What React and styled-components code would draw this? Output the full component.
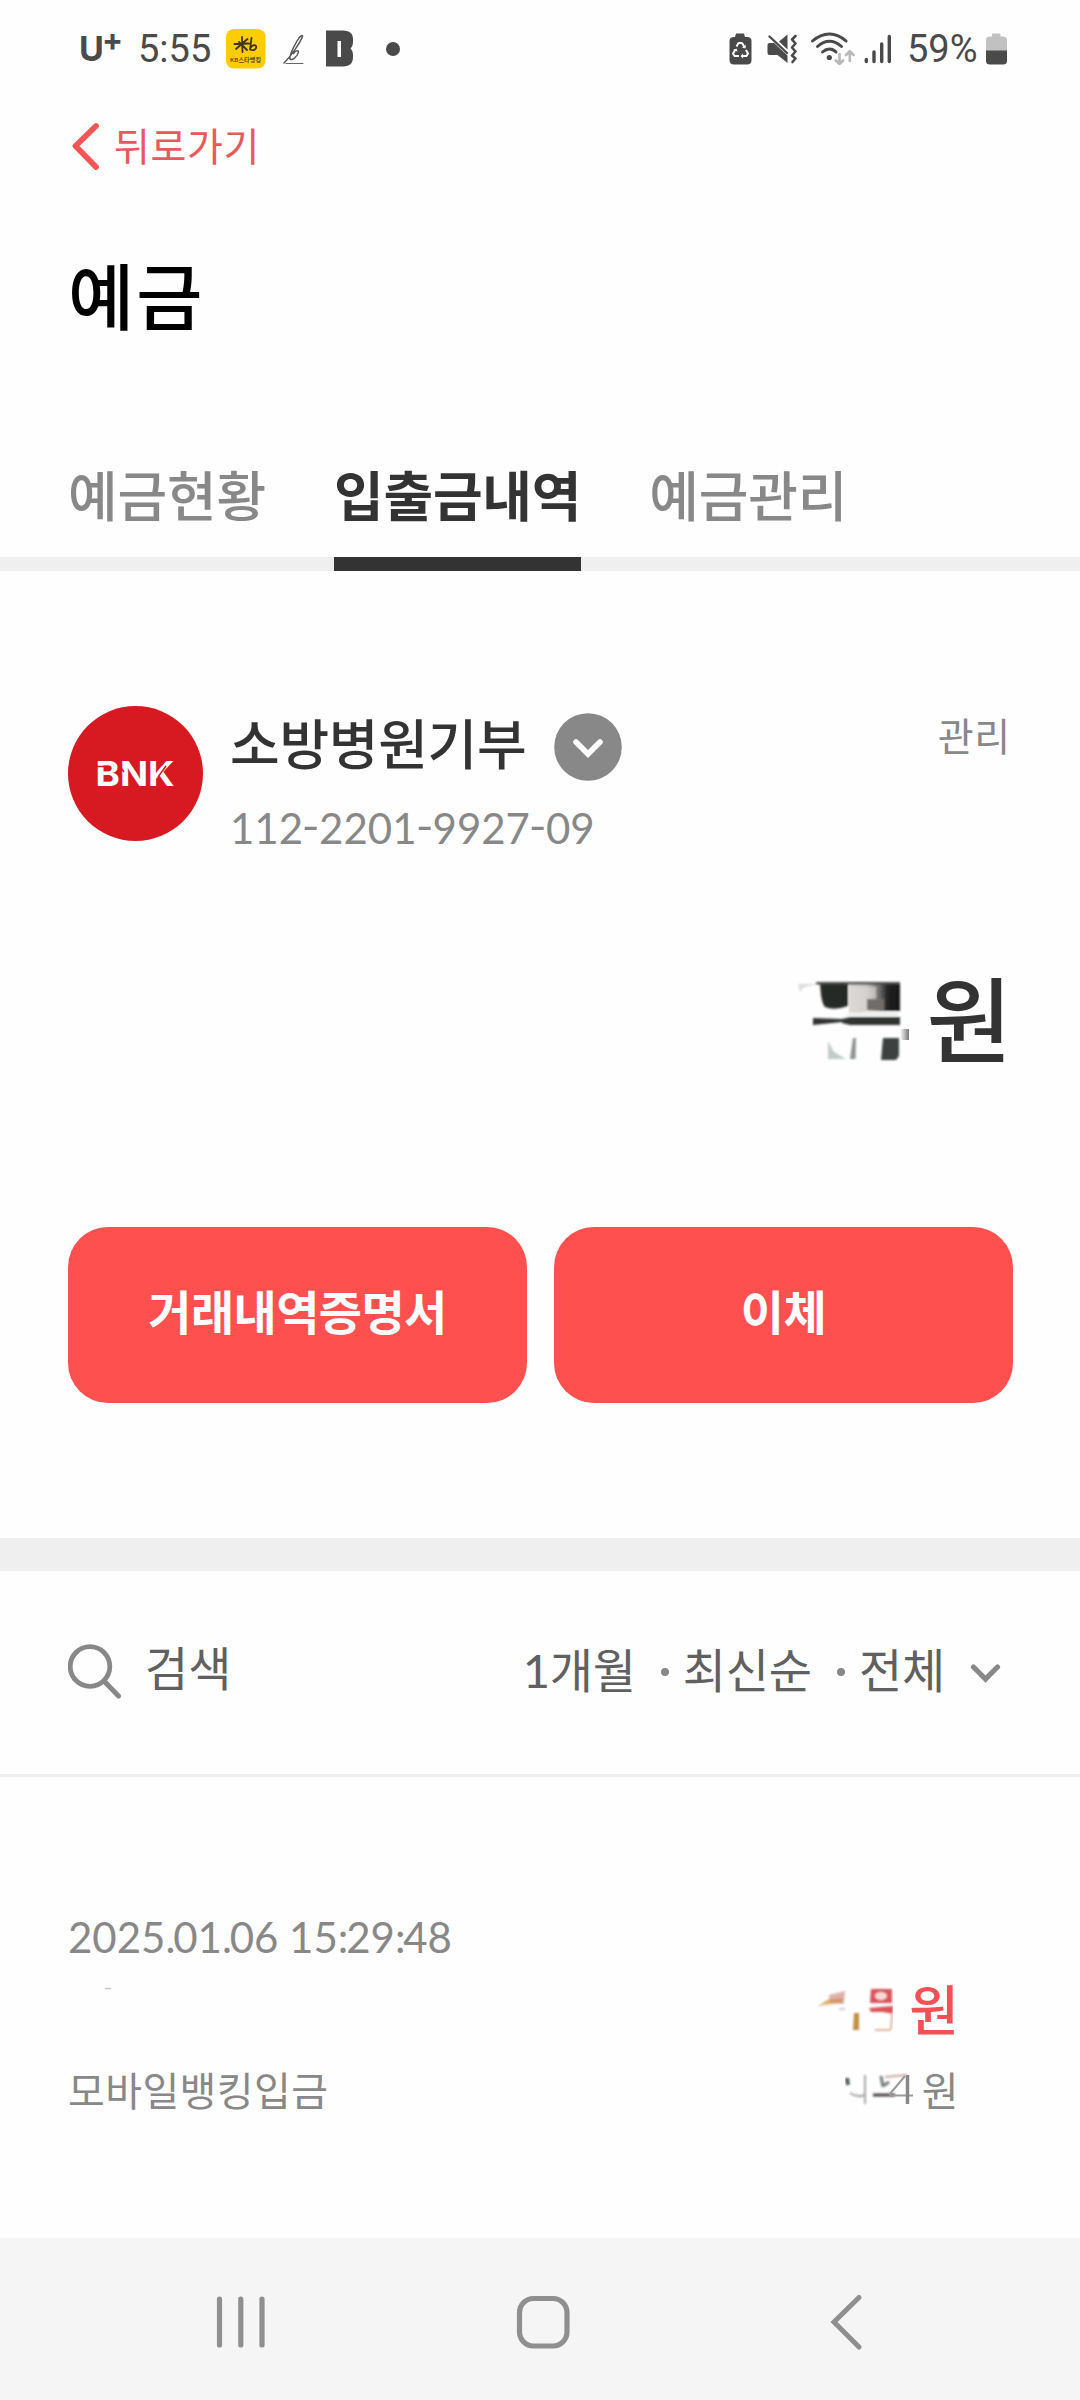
import React from 'react';
import styled, { createGlobalStyle } from 'styled-components';

/* ------------ Static Values ------------ */
const TABS = [
  { key: 'status', label: '예금현황' },
  { key: 'history', label: '입출금내역' },
  { key: 'manage', label: '예금관리' },
];

const FILTERS = ['1개월', '최신순', '전체'];

/* ------------ Styled Components ------------ */
const GlobalStyle = createGlobalStyle`
  * {
    box-sizing: border-box;
  }

  body {
    margin: 0;
    background-color: #fefefe;
    font-family: Lato, 'Noto Sans CJK KR', sans-serif;
  }

  svg {
    display: block;
    flex-shrink: 0;
  }

  button {
    border: 0;
    padding: 0;
    background: none;
    font-family: inherit;
    color: inherit;
  }
`;

const Page = styled.div`
  width: 1080px;
  height: 2400px;
  display: flex;
  flex-direction: column;
  overflow: hidden;
`;

const StatusBar = styled.div`
  height: 97px;
  padding: 0 72px 0 79px;
  display: flex;
  align-items: center;
  justify-content: space-between;
  color: #4a4a4a;
`;

const StatusGroup = styled.div`
  display: flex;
  align-items: center;
`;

const StatusText = styled.span`
  font-family: Roboto, sans-serif;
  font-size: 38px;
  line-height: 44px;
  width: ${props => props.$width}px;
  margin-right: ${props => props.$gap || 0}px;
  white-space: nowrap;
`;

const Carrier = styled.span`
  display: flex;
  width: 44px;
  margin-right: 15px;
  font-family: Inter, sans-serif;
  font-weight: 700;
  font-size: 34px;
  line-height: 44px;
`;

const CarrierPlus = styled.sup`
  font-size: 31px;
  line-height: 26px;
  margin-left: -2px;
  font-weight: 700;
`;

const StatusIcon = styled.svg`
  margin-right: ${props => props.$gap || 0}px;
`;

const BackButton = styled.button`
  height: 98px;
  padding: 0 0 0 71px;
  display: flex;
  align-items: center;
  gap: 14px;
  color: #e75a5c;
  font-size: 39px;
  letter-spacing: 0.6px;
  line-height: 60px;
`;

const Title = styled.h1`
  height: 206px;
  margin: 0;
  padding: 0 68px;
  font-size: 72px;
  font-weight: 500;
  line-height: 203px;
  letter-spacing: 2px;
  color: #000000;
`;

const TabList = styled.nav`
  height: 170px;
  padding: 0 68px;
  display: flex;
  gap: 68px;
  border-bottom: 14px solid #efefef;
`;

const Tab = styled.button`
  height: 170px;
  padding-top: 56px;
  line-height: 80px;
  display: flex;
  align-items: flex-start;
  font-size: 54px;
  font-weight: ${props => props.$active ? 700 : 500};
  letter-spacing: -0.2px;
  color: ${props => props.$active ? '#333333' : '#888888'};
  border-bottom: 14px solid ${props => props.$active ? '#333333' : 'transparent'};
`;

const AccountSection = styled.section`
  height: 967px;
  padding: 135px 67px 0 68px;
  display: flex;
  flex-direction: column;
`;

const AccountHeader = styled.div`
  height: 160px;
  display: flex;
`;

const AccountInfo = styled.div`
  flex-grow: 1;
  padding-left: 26px;
  display: flex;
  flex-direction: column;
`;

const AccountNameRow = styled.div`
  height: 81px;
  display: flex;
  align-items: center;
  gap: 28px;
`;

const AccountName = styled.span`
  font-size: 54px;
  font-weight: 500;
  line-height: 80px;
  letter-spacing: -0.3px;
  color: #333333;
  padding-bottom: 4px;
`;

const AccountNumber = styled.span`
  font-size: 42px;
  line-height: 50px;
  margin-top: 16px;
  color: #888888;
`;

const NumberDash = styled.span`
  display: inline-block;
  transform: scaleX(1.15);
  vertical-align: 3px;
  line-height: 1;
  margin: 0 0.2px;
`;

const ManageLink = styled.a`
  margin-right: 2px;
  font-size: 39px;
  line-height: 60px;
  letter-spacing: 0.8px;
  color: #888888;
`;

const BalanceRow = styled.div`
  height: 130px;
  margin-top: 89px;
  padding-right: 1px;
  display: flex;
  align-items: center;
  justify-content: flex-end;
`;

const BalanceUnit = styled.span`
  margin-left: 12px;
  font-size: 93px;
  font-weight: 500;
  line-height: 130px;
  color: #333333;
`;

const ActionRow = styled.div`
  margin-top: 142px;
  display: flex;
  gap: 27px;
`;

const ActionButton = styled.button`
  flex: 1;
  height: 176px;
  padding-bottom: 12px;
  border-radius: 40px;
  background-color: #ff5050;
  color: #ffffff;
  font-size: 47px;
  font-weight: 700;
  letter-spacing: -0.6px;
`;

const SectionDivider = styled.div`
  height: 33px;
  background-color: #efefef;
`;

const FilterBar = styled.div`
  height: 206px;
  padding: 0 79px 0 68px;
  display: flex;
  align-items: center;
  justify-content: space-between;
  border-bottom: 3px solid #efefef;
  color: #606060;
  font-size: 47px;
  line-height: 70px;
`;

const SearchButton = styled.div`
  display: flex;
  align-items: center;
  gap: 23px;
`;

const SearchIcon = styled.svg`
  margin-bottom: 3px;
`;

const SearchLabel = styled.span`
  padding-bottom: 10px;
`;

const FilterGroup = styled.div`
  display: flex;
  align-items: center;
`;

const FilterLabel = styled.span`
  padding-bottom: 5px;
  letter-spacing: -0.2px;
`;

const FilterDot = styled.i`
  width: 8px;
  height: 8px;
  border-radius: 50%;
  background-color: #888888;
  margin: 0 14px 2px 25px;
`;

const FilterChevron = styled.svg`
  margin-left: 25px;
`;

const Transaction = styled.article`
  height: 461px;
  padding: 130px 121px 0 68px;
  display: flex;
  flex-direction: column;
  color: #888888;
`;

const TransactionDate = styled.time`
  font-size: 42px;
  line-height: 60px;
`;

const Separator = styled.span`
  letter-spacing: -2.2px;
`;

const TransactionRow = styled.div`
  display: flex;
  align-items: center;
  justify-content: space-between;
`;

const AmountRow = styled(TransactionRow)`
  height: 88px;
`;

const DetailRow = styled(TransactionRow)`
  height: 72px;
  font-size: 40px;
  line-height: 60px;
  letter-spacing: 0.4px;
`;

const Amount = styled.span`
  display: flex;
  align-items: center;
`;

const AmountUnit = styled.span`
  margin-left: 16px;
  font-size: 54px;
  font-weight: 500;
  line-height: 70px;
  color: #f55055;
`;

const DetailUnit = styled.span`
  margin-left: 9px;
`;

const NavigationBar = styled.div`
  height: 162px;
  padding: 5px 214px 0 212px;
  display: flex;
  align-items: center;
  justify-content: space-between;
  background-color: #f5f5f5;
`;

const HomeIcon = styled.svg`
  margin-right: 10px;
`;

/* ------------ Status icons ------------ */
function BankAppIcon() {
  return (
    <StatusIcon width="40" height="40" viewBox="0 0 40 40" $gap={17}>
      <rect width="39.5" height="39.5" rx="8" fill="#fecc02" />
      <g stroke="#3c3420" strokeWidth="1.8" fill="none" strokeLinecap="round">
        <path d="M16 8 L16.5 23 M21.500 10 L10 20 M8.5 15 L23 14.500 M13 13 L21 21" />
        <path d="M25.5 9 L24 20.500 C28 22.500 31 19.500 30 17 C28.500 15 25.500 16.500 24.500 19" />
      </g>
      <text x="4" y="32.500" fontSize="6" fontFamily="Lato, 'Noto Sans CJK KR', sans-serif" fontWeight="700" textLength="31" fill="#5a4a18">KB스타뱅킹</text>
    </StatusIcon>
  );
}

function ScriptIcon() {
  return (
    <StatusIcon width="22" height="34" viewBox="0 0 22 34" $gap={21}>
      <g stroke="#555555" fill="none" strokeLinecap="round">
        <path d="M1 31 C8 24 17 11 19.500 4.500 C20 2.500 17 3.500 14 9 C10 16 6 23 7 27 C9 29.500 15 23.500 15.500 20 C15.500 17.500 12 19 10.500 21.500" strokeWidth="1.5" />
        <path d="M3 31.500 H20" strokeWidth="0.900" />
      </g>
    </StatusIcon>
  );
}

function BlockIcon() {
  return (
    <StatusIcon width="28" height="37" viewBox="0 0 28 37" $gap={32}>
      <path fillRule="evenodd" fill="#4a4a4a" d="M0 0.500 H17 C24 0.500 27 4 27 9 V12 C27 15 26 17 24.500 18.500 C26 20 27 22 27 25 V27 C27 33 24 36.500 17 36.500 H0 Z M11.500 11 V27 H15 V11 Z" />
    </StatusIcon>
  );
}

function RecycleBatteryIcon() {
  return (
    <StatusIcon width="23" height="32" viewBox="0 0 23 32" $gap={15}>
      <path fill="#4a4a4a" d="M7 0.500 H15 L16 4 H18 C21 4 22.500 5.500 22.500 8 V27 C22.500 30 21 31.500 18 31.500 H5 C2 31.500 0.500 30 0.500 27 V8 C0.500 5.500 2 4 5 4 H6 Z" />
      <g stroke="#ffffff" strokeWidth="2" fill="none" strokeLinejoin="round">
        <path d="M7.500 13.500 L9.500 10 H13 L15.500 14" />
        <path d="M17 17 L19 20.500 L17.500 23 H13" />
        <path d="M10 23 H5.500 L4 20.500 L6.500 16.500" />
      </g>
      <path d="M17 12 L16.500 15.500 L13 14.500 Z M14 20.500 V25.500 L11.500 23 Z M4 17 L7.500 15.500 L8.500 18.500 Z" fill="#ffffff" />
    </StatusIcon>
  );
}

function MuteVibrateIcon() {
  return (
    <StatusIcon width="31" height="30" viewBox="0 0 31 30" $gap={12}>
      <path fill="#4a4a4a" d="M0.500 11 Q0.500 9 2.500 9 H7 L20.500 21.500 V29 L10.500 21 H2.500 Q0.500 21 0.500 19 Z M12 7.500 L20.500 0.500 V15.500 Z" />
      <path d="M2.500 2.500 L20 19" stroke="#4a4a4a" strokeWidth="2.400" strokeLinecap="round" />
      <path d="M28.500 2 L25 5.500 L28.500 9.500 L25 13.500 L28.500 17.500 L25 21.500 L28.500 24.500 L25.500 28" stroke="#4a4a4a" strokeWidth="2.600" fill="none" strokeLinecap="round" strokeLinejoin="round" />
    </StatusIcon>
  );
}

function WifiIcon() {
  return (
    <StatusIcon width="45" height="34" viewBox="0 0 45 34" $gap={9}>
      <g stroke="#4a4a4a" strokeWidth="3" fill="none" strokeLinecap="round">
        <path d="M2.500 9 C13 -0.500 26 -0.500 36 9" />
        <path d="M7.500 14.500 C15 7.500 24 7.500 31.500 14.500" />
        <path d="M12.500 20 C17 16 22 16 26 20" />
      </g>
      <circle cx="19.300" cy="25.500" r="2.600" fill="#4a4a4a" />
      <g stroke="#b9b9b9" strokeWidth="2.600" fill="none" strokeLinecap="round" strokeLinejoin="round">
        <path d="M29.500 22 V32 M25.800 28.500 L29.500 32 L33 28.500" />
        <path d="M39.800 29 V19.500 M36 23 L39.800 19.200 L43.500 23" />
      </g>
    </StatusIcon>
  );
}

function SignalIcon() {
  return (
    <StatusIcon width="28" height="30" viewBox="0 0 28 30" $gap={15}>
      <path d="M2.300 25.500 V27.500 M10 18 V27.500 M17.700 10 V27.500 M25.300 2.500 V27.500" stroke="#4a4a4a" strokeWidth="3.400" strokeLinecap="round" />
    </StatusIcon>
  );
}

function BatteryIcon() {
  return (
    <StatusIcon width="22" height="32" viewBox="0 0 22 32">
      <path d="M6 3.500 V1.500 Q6 0.500 7 0.500 H13.500 Q14.500 0.500 14.500 1.500 V3.500 H17 Q21 3.500 21 7 V18 H0 V7 Q0 3.500 4 3.500 Z" fill="#c1c1c1" />
      <path d="M0 17.500 H21 V28 Q21 31.500 17 31.500 H4 Q0 31.500 0 28 Z" fill="#4a4a4a" />
    </StatusIcon>
  );
}

/* ------------ Account drawings ------------ */
function BankLogo() {
  return (
    <svg width="136" height="136" viewBox="0 0 136 136">
      <circle cx="67.500" cy="67.500" r="67.500" fill="#d71921" />
      <text x="27.500" y="79.500" fontFamily="Inter, sans-serif" fontSize="34" fontWeight="700" textLength="79" lengthAdjust="spacingAndGlyphs" fill="#ffffff">BNK</text>
      <path d="M28 60.500 H36 M52.500 61 L56 66 M90 71 L98 60" stroke="#d71921" strokeWidth="1.500" />
    </svg>
  );
}

// Erased part of the balance, only the remains of a glyph stay visible
function BalanceRemains() {
  return (
    <svg width="118" height="86" viewBox="0 0 118 86">
      <defs>
        <linearGradient id="fade" x1="0" x2="1">
          <stop offset="0" stopColor="#d9d6d4" />
          <stop offset="0.35" stopColor="#c6c2c0" />
          <stop offset="0.6" stopColor="#6a6a6a" />
          <stop offset="0.75" stopColor="#222222" />
          <stop offset="1" stopColor="#161616" />
        </linearGradient>
        <linearGradient id="tail" x1="0" x2="1">
          <stop offset="0" stopColor="#ffffff" />
          <stop offset="1" stopColor="#777777" />
        </linearGradient>
        <filter id="soft">
          <feGaussianBlur stdDeviation="0.8" />
        </filter>
      </defs>
      <g filter="url(#soft)">
        <path d="M2 7 H24 L8 10 L4 15 Z" fill="#dcdcdc" />
        <path d="M53 6 H104 V34 H72 L53 36 Z" fill="url(#fade)" />
        <path d="M53 10 H80 V22 H71 V33 H54 Z" fill="#dedad9" opacity="0.6" />
        <path d="M71 22 H88 V33 H71 Z" fill="#6f6c6a" />
        <path d="M24 6 H52 V29 Q38 34 29 30 Q25 26 24 6 Z" fill="#262a26" />
        <path d="M20 5 H104 V7.500 H20 Z" fill="#4a4a4a" />
        <path d="M53 35 H102 V39 H50 Z" fill="#eeeeee" />
        <path d="M17 41 L46 42 V45 L17 48 Z" fill="#303030" />
        <path d="M46 42 L54 40 H104 V48 H54 L46 46 Z" fill="#303432" />
        <path d="M32 64 L38 75 L50 82 H32 Z" fill="#c2cbc8" />
        <path d="M57 61 H60 L59.500 82 H54 Z" fill="#8b938f" />
        <path d="M87 61 H103 V79 L100 83 H85 Z" fill="#3c4240" />
      </g>
      <rect x="104" y="52" width="9" height="11" fill="url(#tail)" />
    </svg>
  );
}

function AmountRemains() {
  return (
    <svg width="78" height="52" viewBox="0 0 78 52">
      <g filter="url(#soft)">
        <path d="M2 22 L12 15 L28 13 L27 18 L8 20 Z" fill="#e0b06a" />
        <path d="M14 10 L30 6 L29 19 L14 17 Z" fill="#c9826f" opacity="0.6" />
        <path d="M24 24 H30" stroke="#bbbbbb" strokeWidth="1.500" />
        <path d="M39 28 H44 V45 H38 Z" fill="#c09040" />
        <path d="M56 4 H77 V18 H55 Z" fill="#d9535a" />
        <ellipse cx="66" cy="11" rx="6" ry="4" fill="#f6d9da" />
        <path d="M54 23 L78 21 V29 L68 27 L56 27 Z" fill="#d9535a" />
        <path d="M77 28 L76 44 M60 45 H76" stroke="#dfb4a0" strokeWidth="2" fill="none" />
      </g>
    </svg>
  );
}

function DetailRemains() {
  return (
    <svg width="68" height="36" viewBox="0 0 68 36">
      <g filter="url(#soft)">
        <path d="M2 5 L3 12" stroke="#555f59" strokeWidth="4" />
        <path d="M20 2 V31 M5 20 Q12 25 20 22" stroke="#a8a8a8" strokeWidth="2" fill="none" />
        <path d="M36 3 L38 14 M38 13 L44 9" stroke="#777e7a" strokeWidth="3" fill="none" />
        <path d="M40 4 L62 2" stroke="#caa5a5" strokeWidth="2" />
        <path d="M28 22 H50" stroke="#4a4545" strokeWidth="3" />
      </g>
      <path d="M68 22.500 H45 M44 22 L60 3" stroke="#9a9a9a" strokeWidth="2" />
      <path d="M62.500 2 V31" stroke="#888888" strokeWidth="3.500" />
    </svg>
  );
}

function NameRemains() {
  return (
    <svg width="60" height="52" viewBox="0 0 60 52">
      <path d="M37 3.500 H43" stroke="#c8c8c8" strokeWidth="1.500" />
    </svg>
  );
}

/* ------------ Text helpers ------------ */
function AccountNo(props) {
  const groups = props.value.split('-');
  return (
    <AccountNumber>
      {groups.map((group, index) => (
        <React.Fragment key={`group-${index}`}>
          {index > 0 ? <NumberDash>-</NumberDash> : null}
          {group}
        </React.Fragment>
      ))}
    </AccountNumber>
  );
}

function DateTime(props) {
  const parts = props.value.split(/([.:])/);
  return (
    <TransactionDate>
      {parts.map((part, index) => (
        index % 2 === 1
          ? <Separator key={`part-${index}`}>{part}</Separator>
          : part
      ))}
    </TransactionDate>
  );
}

/* ------------ Component ------------ */
function App() {
  return (
    <React.Fragment>
      <GlobalStyle />
      <Page>
        <StatusBar>
          <StatusGroup>
            <Carrier>U<CarrierPlus>+</CarrierPlus></Carrier>
            <StatusText $width={76} $gap={12}>5:55</StatusText>
            <BankAppIcon />
            <ScriptIcon />
            <BlockIcon />
            <svg width="14" height="14" viewBox="0 0 14 14">
              <circle cx="7" cy="7" r="7" fill="#4a4a4a" />
            </svg>
          </StatusGroup>
          <StatusGroup>
            <RecycleBatteryIcon />
            <MuteVibrateIcon />
            <WifiIcon />
            <SignalIcon />
            <StatusText $width={71} $gap={8}>59%</StatusText>
            <BatteryIcon />
          </StatusGroup>
        </StatusBar>

        <BackButton>
          <svg width="29" height="48" viewBox="0 0 29 48">
            <path d="M25 4 L4.500 24 L25 45" fill="none" stroke="#f55557" strokeWidth="5.800" strokeLinecap="round" strokeLinejoin="round" />
          </svg>
          뒤로가기
        </BackButton>
        <Title>예금</Title>
        <TabList>
          {TABS.map(tab => (
            <Tab key={tab.key} $active={tab.key === 'history'}>{tab.label}</Tab>
          ))}
        </TabList>

        <AccountSection>
          <AccountHeader>
            <BankLogo />
            <AccountInfo>
              <AccountNameRow>
                <AccountName>소방병원기부</AccountName>
                <svg width="68" height="68" viewBox="0 0 68 68">
                  <circle cx="34" cy="34" r="33.800" fill="#888888" />
                  <path d="M22 29 L34 41 L46 29" fill="none" stroke="#ffffff" strokeWidth="5.600" strokeLinecap="round" />
                </svg>
              </AccountNameRow>
              <AccountNo value="112-2201-9927-09" />
            </AccountInfo>
            <ManageLink>관리</ManageLink>
          </AccountHeader>
          <BalanceRow>
            <BalanceRemains />
            <BalanceUnit>원</BalanceUnit>
          </BalanceRow>
          <ActionRow>
            <ActionButton>거래내역증명서</ActionButton>
            <ActionButton>이체</ActionButton>
          </ActionRow>
        </AccountSection>

        <SectionDivider />
        <FilterBar>
          <SearchButton>
            <SearchIcon width="54" height="56" viewBox="0 0 54 56">
              <circle cx="22" cy="23.500" r="19.800" fill="none" stroke="#888888" strokeWidth="4.800" />
              <path d="M36.500 38.500 L50.500 53" stroke="#888888" strokeWidth="5" strokeLinecap="round" />
            </SearchIcon>
            <SearchLabel>검색</SearchLabel>
          </SearchButton>
          <FilterGroup>
            {FILTERS.map((filter, index) => (
              <React.Fragment key={filter}>
                {index > 0 ? <FilterDot /> : null}
                <FilterLabel>{filter}</FilterLabel>
              </React.Fragment>
            ))}
            <FilterChevron width="31" height="20" viewBox="0 0 31 20">
              <path d="M3.500 4 L15.500 16 L27.500 4" fill="none" stroke="#888888" strokeWidth="5.200" strokeLinecap="round" />
            </FilterChevron>
          </FilterGroup>
        </FilterBar>

        <Transaction>
          <DateTime value="2025.01.06 15:29:48" />
          <AmountRow>
            <NameRemains />
            <Amount>
              <AmountRemains />
              <AmountUnit>원</AmountUnit>
            </Amount>
          </AmountRow>
          <DetailRow>
            <span>모바일뱅킹입금</span>
            <Amount>
              <DetailRemains />
              <DetailUnit>원</DetailUnit>
            </Amount>
          </DetailRow>
        </Transaction>

        <NavigationBar>
          <svg width="56" height="56" viewBox="0 0 56 56">
            <path d="M7.500 5 V51 M28.800 5 V51 M50 5 V51" stroke="#8f8f8f" strokeWidth="5.200" strokeLinecap="round" />
          </svg>
          <HomeIcon width="56" height="56" viewBox="0 0 56 56">
            <rect x="4.500" y="4.500" width="47.500" height="47.500" rx="14" fill="none" stroke="#8f8f8f" strokeWidth="5.200" />
          </HomeIcon>
          <svg width="38" height="58" viewBox="0 0 38 58">
            <path d="M31 4.500 L6 29 L31 54" fill="none" stroke="#8f8f8f" strokeWidth="5" strokeLinecap="round" />
          </svg>
        </NavigationBar>
      </Page>
    </React.Fragment>
  );
}

export default App;
